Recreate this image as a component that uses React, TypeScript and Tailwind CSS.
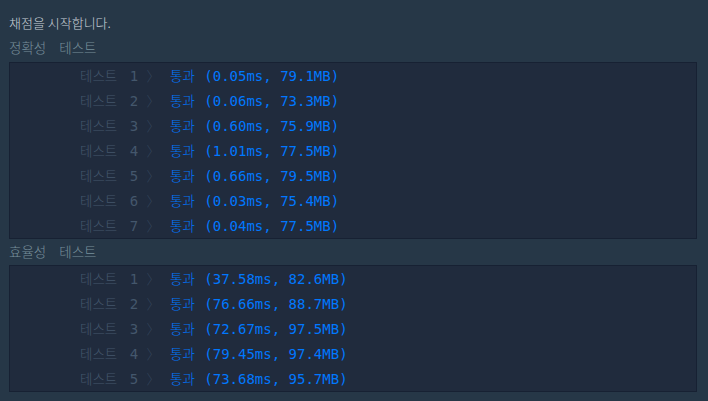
const accuracy = [
  "0.05ms, 79.1MB",
  "0.06ms, 73.3MB",
  "0.60ms, 75.9MB",
  "1.01ms, 77.5MB",
  "0.66ms, 79.5MB",
  "0.03ms, 75.4MB",
  "0.04ms, 77.5MB",
];

const efficiency = [
  "37.58ms, 82.6MB",
  "76.66ms, 88.7MB",
  "72.67ms, 97.5MB",
  "79.45ms, 97.4MB",
  "73.68ms, 95.7MB",
];

const ko = "text-[13.5px] font-light font-['Noto_Sans_CJK_KR',sans-serif]";

const ResultRow = ({ n, value }: { n: number; value: string }) => {
  return (
    <div className="flex h-[25px] items-center whitespace-pre">
      <span className="w-[160px] shrink-0 pl-[70px] text-[#44576c]">
        <span className={ko}>테스트</span>
        <span className="ml-[4px]"> {n} </span>
        <span className={`${ko} text-[#33445a]`}>〉</span>
      </span>
      <span className="text-[#0078ff]">
        <span className={ko}>통과</span>
        <span className="ml-[1px]"> ({value})</span>
      </span>
    </div>
  );
};

const GroupLabel = ({ title }: { title: string }) => {
  return (
    <div className="flex h-[25px] items-center text-[#78909c]">
      <span className={ko}>{title}</span>
      <span className={`${ko} ml-[13px]`}>테스트</span>
    </div>
  );
};

const App = () => {
  return (
    <div className="h-[401px] w-full bg-[#263747] pl-[9px] pr-[11px] pt-[10px] font-['DejaVu_Sans_Mono','Noto_Sans_CJK_KR',monospace] text-[14px] leading-[25px]">
      <div className="flex h-[25px] items-center text-[#c8d0d7]">
        <span className="text-[13px] font-light font-['Noto_Sans_CJK_KR',sans-serif]">
          채점을 시작합니다.
        </span>
      </div>
      <GroupLabel title="정확성" />
      <div className="mt-[2px] border border-[#172133] bg-[#202b3d]">
        {accuracy.map((v, i) => (
          <ResultRow key={i} n={i + 1} value={v} />
        ))}
      </div>
      <GroupLabel title="효율성" />
      <div className="mt-[1px] border border-[#172133] bg-[#202b3d]">
        {efficiency.map((v, i) => (
          <ResultRow key={i} n={i + 1} value={v} />
        ))}
      </div>
    </div>
  );
};

export default App;
